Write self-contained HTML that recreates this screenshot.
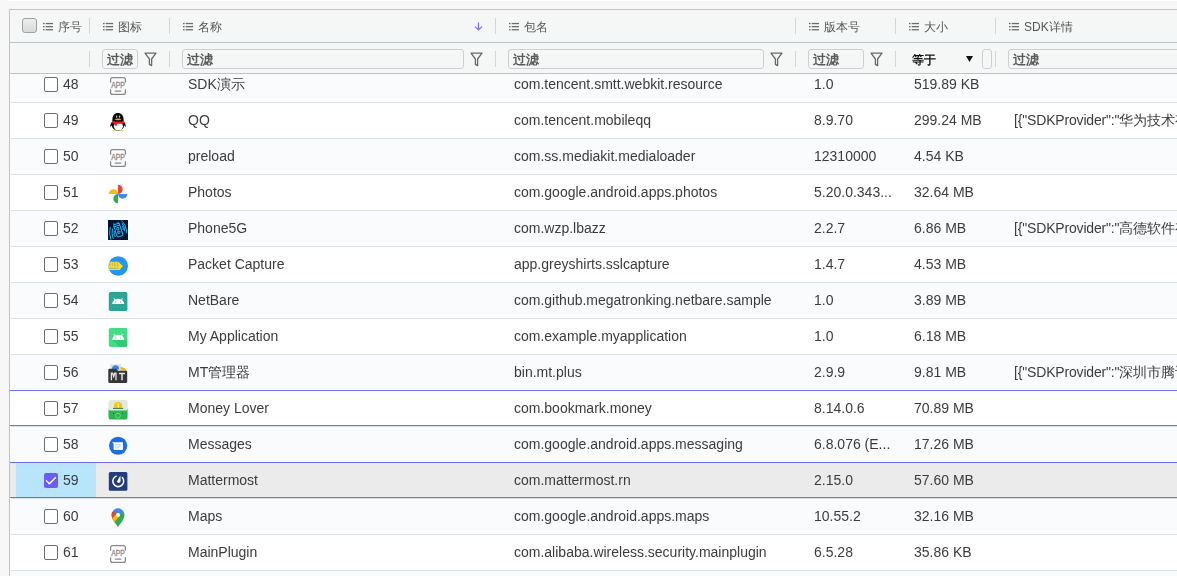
<!DOCTYPE html><html><head><meta charset="utf-8"><style>
*{box-sizing:border-box;margin:0;padding:0}
html,body{width:1177px;height:576px;overflow:hidden;background:#f7f7f7;font-family:"Liberation Sans", sans-serif}
.a{position:absolute}
.t,.ht,.inp{will-change:transform}
.mi,.ic{position:absolute;display:block}
.ht{position:absolute;font-size:12px;color:#555;line-height:14px;white-space:nowrap}
.sep{position:absolute;width:1px;background:#d3d7d9}
.inp{position:absolute;height:20px;top:49px;border:1px solid #cdd0d1;border-radius:3px;font-size:13px;color:#5a5a5a;line-height:19px;padding-left:4px;white-space:nowrap;overflow:hidden;font-weight:bold}
.row{position:absolute;left:11px;width:1166px;height:36px;border-bottom:1px solid #dde0e3}
.row.o{background:#fafbfd}
.row.e{background:#fff}
.cb{position:absolute;left:44px;width:14px;height:15px;border:1.6px solid #6e6e6e;border-radius:2px;background:#fff}
.t{position:absolute;font-size:14px;color:#3c3c3c;line-height:16px;white-space:nowrap}
</style></head><body>
<div class="a" style="left:9px;top:0;width:1168px;height:1px;background:#fff"></div>
<div class="a" id="grid" style="left:9px;top:9px;width:1168px;height:567px;border-left:1px solid #bcc4ca;border-top:1px solid #bcc4ca;background:#fff;overflow:hidden"></div>

<div class="row o" style="top:67px"></div>
<div class="row e" style="top:103px"></div>
<div class="row o" style="top:139px"></div>
<div class="row e" style="top:175px"></div>
<div class="row o" style="top:211px"></div>
<div class="row e" style="top:247px"></div>
<div class="row o" style="top:283px"></div>
<div class="row e" style="top:319px"></div>
<div class="row o" style="top:355px"></div>
<div class="row e" style="top:391px"></div>
<div class="row o" style="top:427px"></div>
<div class="row e" style="top:463px"></div>
<div class="row o" style="top:499px"></div>
<div class="row e" style="top:535px"></div>
<div class="row o" style="top:571px"></div>
<div class="a" style="left:10px;top:390px;width:1167px;height:1px;background:#6f6ff4"></div>
<div class="a" style="left:10px;top:425px;width:1167px;height:1px;background:#6f6ff4"></div>
<div class="a" style="left:10px;top:463px;width:1167px;height:34px;background:#ebebeb"></div>
<div class="a" style="left:16px;top:463px;width:80px;height:34px;background:#b8e4fc"></div>
<div class="a" style="left:10px;top:462px;width:1167px;height:1px;background:#6f6ff4"></div>
<div class="a" style="left:10px;top:497px;width:1167px;height:1px;background:#6f6ff4"></div>
<div class="cb" style="top:77px"></div>
<div class="t" style="left:63px;top:76px">48</div>
<svg class="ic" style="left:108px;top:76px" width="20" height="20" viewBox="0 0 20 20"><g fill="none" stroke="#8a8a8a" stroke-width="1.25" stroke-linecap="round"><path d="M2.6 6.2 V3.6 Q2.6 1.6 4.6 1.6 H15.4 Q17.4 1.6 17.4 3.6 V6.2"/><path d="M2.6 13.6 V16.4 Q2.6 18.4 4.6 18.4 H15.4 Q17.4 18.4 17.4 16.4 V13.6"/><path d="M7.2 15.1 H12.8"/></g><text x="10" y="12.3" text-anchor="middle" font-family="Liberation Sans" font-size="8.2" fill="#8a8a8a" stroke="#8a8a8a" stroke-width="0.3" textLength="13.6" lengthAdjust="spacingAndGlyphs">APP</text></svg>
<div class="t" style="left:188px;top:76px">SDK演示</div>
<div class="t" style="left:514px;top:76px">com.tencent.smtt.webkit.resource</div>
<div class="t" style="left:814px;top:76px">1.0</div>
<div class="t" style="left:914px;top:76px">519.89 KB</div>
<div class="cb" style="top:113px"></div>
<div class="t" style="left:63px;top:112px">49</div>
<svg class="ic" style="left:108px;top:112px" width="20" height="20" viewBox="0 0 20 20"><path d="M10 1 C13.3 1 15.5 3.4 15.6 7.2 L15.7 9.6 C16.8 11 17.9 12.6 17.8 14.6 C17.4 14.8 16.7 14.2 16.2 13.6 C15.9 16.5 13.8 18.6 10 18.7 C6.2 18.6 4.1 16.5 3.8 13.6 C3.3 14.2 2.6 14.8 2.2 14.6 C2.1 12.6 3.2 11 4.3 9.6 L4.4 7.2 C4.5 3.4 6.7 1 10 1 Z" fill="#0b0b0b"/><ellipse cx="10.4" cy="14.3" rx="4.6" ry="4" fill="#fff"/><path d="M4.2 8.7 Q10 10.6 16.2 8.7 L16.6 10.9 Q10 12.6 4 10.9 Z" fill="#ef1c23"/><path d="M6.8 10.6 H9.1 V13.6 H6.8 Z" fill="#ef1c23"/><ellipse cx="10.1" cy="7.3" rx="3.1" ry="0.85" fill="#f5a400"/><ellipse cx="8.6" cy="4.6" rx="0.6" ry="1.2" fill="#d8d8d8"/><ellipse cx="11.5" cy="4.6" rx="0.6" ry="1.2" fill="#d8d8d8"/><path d="M3.8 18.8 Q6 17.2 8.6 18.6 Z M11.6 18.6 Q14 17.2 16.2 18.8 Z" fill="#f6a800"/></svg>
<div class="t" style="left:188px;top:112px">QQ</div>
<div class="t" style="left:514px;top:112px">com.tencent.mobileqq</div>
<div class="t" style="left:814px;top:112px">8.9.70</div>
<div class="t" style="left:914px;top:112px">299.24 MB</div>
<div class="t" style="left:1014px;top:112px;letter-spacing:-0.17px">[{"SDKProvider":"华为技术有限公司"</div>
<div class="cb" style="top:149px"></div>
<div class="t" style="left:63px;top:148px">50</div>
<svg class="ic" style="left:108px;top:148px" width="20" height="20" viewBox="0 0 20 20"><g fill="none" stroke="#8a8a8a" stroke-width="1.25" stroke-linecap="round"><path d="M2.6 6.2 V3.6 Q2.6 1.6 4.6 1.6 H15.4 Q17.4 1.6 17.4 3.6 V6.2"/><path d="M2.6 13.6 V16.4 Q2.6 18.4 4.6 18.4 H15.4 Q17.4 18.4 17.4 16.4 V13.6"/><path d="M7.2 15.1 H12.8"/></g><text x="10" y="12.3" text-anchor="middle" font-family="Liberation Sans" font-size="8.2" fill="#8a8a8a" stroke="#8a8a8a" stroke-width="0.3" textLength="13.6" lengthAdjust="spacingAndGlyphs">APP</text></svg>
<div class="t" style="left:188px;top:148px">preload</div>
<div class="t" style="left:514px;top:148px">com.ss.mediakit.medialoader</div>
<div class="t" style="left:814px;top:148px">12310000</div>
<div class="t" style="left:914px;top:148px">4.54 KB</div>
<div class="cb" style="top:185px"></div>
<div class="t" style="left:63px;top:184px">51</div>
<svg class="ic" style="left:108px;top:184px" width="20" height="20" viewBox="0 0 20 20"><path d="M10 10 H0.7 A4.65 4.65 0 0 1 10 10 Z" fill="#fbbc04"/><path d="M10 10 V0.7 A4.65 4.65 0 0 1 10 10 Z" fill="#ea4335"/><path d="M10 10 H19.3 A4.65 4.65 0 0 1 10 10 Z" fill="#4285f4"/><path d="M10 10 V19.3 A4.65 4.65 0 0 1 10 10 Z" fill="#34a853"/></svg>
<div class="t" style="left:188px;top:184px">Photos</div>
<div class="t" style="left:514px;top:184px">com.google.android.apps.photos</div>
<div class="t" style="left:814px;top:184px">5.20.0.343...</div>
<div class="t" style="left:914px;top:184px">32.64 MB</div>
<div class="cb" style="top:221px"></div>
<div class="t" style="left:63px;top:220px">52</div>
<svg class="ic" style="left:108px;top:220px" width="20" height="20" viewBox="0 0 20 20"><rect x="0" y="0" width="20" height="20" fill="#061632"/><g fill="none" stroke="#29b6f2" stroke-width="1" stroke-linecap="round"><g transform="rotate(-18 10.5 10.5)"><rect x="7.4" y="3.6" width="6" height="13" rx="1.2"/><path d="M7.4 5.6 H13.4 M8.2 3.6 V2.6 M12.6 3.6 V2.6"/><circle cx="10.4" cy="8.6" r="1.2"/><circle cx="10.4" cy="12.2" r="1.2"/></g><path d="M2.2 7.4 Q0.6 13 2.8 19.4"/><path d="M4.4 9 Q3.2 13.6 5.2 18.6"/><path d="M6.2 11.4 Q5.8 14.4 7 16.6"/><path d="M13.6 0.8 Q18 4.2 18.8 13"/><path d="M14.2 3.4 Q16.6 6.4 16.8 11"/><path d="M14.6 6.2 Q15.4 8 15.2 9.6"/></g></svg>
<div class="t" style="left:188px;top:220px">Phone5G</div>
<div class="t" style="left:514px;top:220px">com.wzp.lbazz</div>
<div class="t" style="left:814px;top:220px">2.2.7</div>
<div class="t" style="left:914px;top:220px">6.86 MB</div>
<div class="t" style="left:1014px;top:220px;letter-spacing:-0.17px">[{"SDKProvider":"高德软件有限公司"</div>
<div class="cb" style="top:257px"></div>
<div class="t" style="left:63px;top:256px">53</div>
<svg class="ic" style="left:108px;top:256px" width="20" height="20" viewBox="0 0 20 20"><defs><clipPath id="pc"><circle cx="10.2" cy="10" r="9.8"/></clipPath></defs><circle cx="10.2" cy="10" r="9.8" fill="#2196f3"/><g clip-path="url(#pc)"><path d="M-1 5.7 H10.4 L14.9 10 L11.6 14 H-1 Z" fill="#fdd835"/><path d="M0 12.3 H10" stroke="#97b97a" stroke-width="1"/><path d="M2.2 6.6 Q1 8 2.2 9.8 M4.6 6.6 Q3.4 8 4.6 9.8 M6.6 6.4 V9.8 H8 M9.4 6.4 V9.8 H10.6" fill="none" stroke="#98b680" stroke-width="0.9"/></g></svg>
<div class="t" style="left:188px;top:256px">Packet Capture</div>
<div class="t" style="left:514px;top:256px">app.greyshirts.sslcapture</div>
<div class="t" style="left:814px;top:256px">1.4.7</div>
<div class="t" style="left:914px;top:256px">4.53 MB</div>
<div class="cb" style="top:293px"></div>
<div class="t" style="left:63px;top:292px">54</div>
<svg class="ic" style="left:108px;top:292px" width="20" height="20" viewBox="0 0 20 20"><rect x="0.8" y="0" width="18.6" height="19" rx="1.8" fill="#26a392"/><g stroke="#fff" stroke-opacity="0.12" stroke-width="0.5"><path d="M3.8 0 V19 M6.8 0 V19 M9.8 0 V19 M12.8 0 V19 M15.8 0 V19 M0.8 3 H19.4 M0.8 6 H19.4 M0.8 9 H19.4 M0.8 12 H19.4 M0.8 15 H19.4"/></g><path d="M4.2 12.1 A6 5.4 0 0 1 16.2 12.1 Z" fill="#fff"/><path d="M6 6.4 L7 7.8 M14.4 6.4 L13.4 7.8" stroke="#fff" stroke-width="0.9" stroke-linecap="round"/><circle cx="7.8" cy="10" r="0.6" fill="#26a392"/><circle cx="12.5" cy="10" r="0.6" fill="#26a392"/></svg>
<div class="t" style="left:188px;top:292px">NetBare</div>
<div class="t" style="left:514px;top:292px">com.github.megatronking.netbare.sample</div>
<div class="t" style="left:814px;top:292px">1.0</div>
<div class="t" style="left:914px;top:292px">3.89 MB</div>
<div class="cb" style="top:329px"></div>
<div class="t" style="left:63px;top:328px">55</div>
<svg class="ic" style="left:108px;top:328px" width="20" height="20" viewBox="0 0 20 20"><rect x="0.8" y="0" width="18.6" height="19" rx="1.8" fill="#3ddc84"/><g stroke="#fff" stroke-opacity="0.12" stroke-width="0.5"><path d="M3.8 0 V19 M6.8 0 V19 M9.8 0 V19 M12.8 0 V19 M15.8 0 V19 M0.8 3 H19.4 M0.8 6 H19.4 M0.8 9 H19.4 M0.8 12 H19.4 M0.8 15 H19.4"/></g><path d="M3.6 11.4 L11.4 19 H17.6 A1.6 1.6 0 0 0 19.2 17.4 V13 L16.6 11.4 Z" fill="#2cb96a" opacity="0.55"/><path d="M4.2 12.1 A6 5.4 0 0 1 16.2 12.1 Z" fill="#fff"/><path d="M6 6.4 L7 7.8 M14.4 6.4 L13.4 7.8" stroke="#fff" stroke-width="0.9" stroke-linecap="round"/><circle cx="7.8" cy="10" r="0.6" fill="#3ddc84"/><circle cx="12.5" cy="10" r="0.6" fill="#3ddc84"/></svg>
<div class="t" style="left:188px;top:328px">My Application</div>
<div class="t" style="left:514px;top:328px">com.example.myapplication</div>
<div class="t" style="left:814px;top:328px">1.0</div>
<div class="t" style="left:914px;top:328px">6.18 MB</div>
<div class="cb" style="top:365px"></div>
<div class="t" style="left:63px;top:364px">56</div>
<svg class="ic" style="left:108px;top:364px" width="20" height="20" viewBox="0 0 20 20"><rect x="2.2" y="0.2" width="10.8" height="5.6" fill="#e2e2e2"/><path d="M4 5.4 Q4 1.2 7.6 1.2 Q11.2 1.2 11.2 5.4 Z" fill="#3b82f0"/><path d="M12.6 2.8 Q17 3.4 19.2 6.4 H12.6 Z" fill="#f9b40f"/><path d="M0.3 6.2 Q0.3 4.8 1.6 4.8 H8.4 L10 6.8 H18 Q19.2 6.8 19.2 8 V17.8 Q19.2 19 18 19 H1.6 Q0.3 19 0.3 17.8 Z" fill="#373737"/><path d="M3.4 16.3 V9.2 H4.6 L5.7 12.4 L6.8 9.2 H8 V16.3" fill="none" stroke="#e6e6e6" stroke-width="1.3"/><path d="M11 9.6 H17 M14 9.6 V16.3" fill="none" stroke="#e6e6e6" stroke-width="1.5"/></svg>
<div class="t" style="left:188px;top:364px">MT管理器</div>
<div class="t" style="left:514px;top:364px">bin.mt.plus</div>
<div class="t" style="left:814px;top:364px">2.9.9</div>
<div class="t" style="left:914px;top:364px">9.81 MB</div>
<div class="t" style="left:1014px;top:364px;letter-spacing:-0.17px">[{"SDKProvider":"深圳市腾讯计算机"</div>
<div class="cb" style="top:401px"></div>
<div class="t" style="left:63px;top:400px">57</div>
<svg class="ic" style="left:108px;top:400px" width="20" height="20" viewBox="0 0 20 20"><path d="M0.5 8.6 H19.6 V16.9 A2.6 2.6 0 0 1 17 19.5 H3.1 A2.6 2.6 0 0 1 0.5 16.9 Z" fill="#2db54e"/><path d="M0.5 2.6 A2.6 2.6 0 0 1 3.1 0 H17 A2.6 2.6 0 0 1 19.6 2.6 V9 Q19.6 10.4 18 10.4 H2.1 Q0.5 10.4 0.5 9 Z" fill="#e0e8e2"/><path d="M7.15 8.6 A4 4 0 1 1 13.05 8.6 Z" fill="#f7c600"/><path d="M9.7 3.6 L10.7 3.2 V8.2 H9.8 Z" fill="#fff"/><path d="M5.4 8.4 H14.8" stroke="#2d6b3a" stroke-width="0.9" stroke-linecap="round"/><circle cx="5.5" cy="13.5" r="0.6" fill="#16542a"/><circle cx="14.8" cy="13.5" r="0.6" fill="#16542a"/><circle cx="10" cy="15.6" r="2.4" fill="none" stroke="#7cd494" stroke-width="0.9"/></svg>
<div class="t" style="left:188px;top:400px">Money Lover</div>
<div class="t" style="left:514px;top:400px">com.bookmark.money</div>
<div class="t" style="left:814px;top:400px">8.14.0.6</div>
<div class="t" style="left:914px;top:400px">70.89 MB</div>
<div class="cb" style="top:437px"></div>
<div class="t" style="left:63px;top:436px">58</div>
<svg class="ic" style="left:108px;top:436px" width="20" height="20" viewBox="0 0 20 20"><circle cx="10.1" cy="9.75" r="9.1" fill="#1b6fe6"/><path d="M4.2 6.2 H14.9 V13.2 Q14.9 14 14.1 14 H6.4 Q5.6 14 5.6 13.2 V8 Z" fill="#fff"/><path d="M7.2 8.6 H13 M7.2 10.2 H13 M7.2 11.8 H11" stroke="#b9d2f8" stroke-width="0.9"/></svg>
<div class="t" style="left:188px;top:436px">Messages</div>
<div class="t" style="left:514px;top:436px">com.google.android.apps.messaging</div>
<div class="t" style="left:814px;top:436px">6.8.076 (E...</div>
<div class="t" style="left:914px;top:436px">17.26 MB</div>
<div class="a" style="left:44px;top:473px;width:14px;height:15px;background:#6b5cf5;border-radius:2px"></div><svg class="ic" style="left:44px;top:473px" width="14" height="15" viewBox="0 0 14 15"><path d="M2.2 7.6 L5.4 10.8 L11.8 4.2" fill="none" stroke="#fff" stroke-width="1.4"/></svg>
<div class="t" style="left:63px;top:472px">59</div>
<svg class="ic" style="left:108px;top:472px" width="20" height="20" viewBox="0 0 20 20"><rect x="0.8" y="0" width="18.6" height="18.8" rx="1.5" fill="#213d7c"/><path d="M8.8 3.2 A6.2 6.2 0 1 0 14.6 4.8 L13.4 5.6 A4.7 4.7 0 1 1 9 4.6 Z" fill="#fff"/><path d="M12.4 3.6 L12.6 9 A1.9 1.9 0 0 1 8.9 9.6 Z" fill="#fff"/></svg>
<div class="t" style="left:188px;top:472px">Mattermost</div>
<div class="t" style="left:514px;top:472px">com.mattermost.rn</div>
<div class="t" style="left:814px;top:472px">2.15.0</div>
<div class="t" style="left:914px;top:472px">57.60 MB</div>
<div class="cb" style="top:509px"></div>
<div class="t" style="left:63px;top:508px">60</div>
<svg class="ic" style="left:108px;top:508px" width="20" height="20" viewBox="0 0 20 20"><defs><clipPath id="mp"><path d="M10 19.2 C9.2 16.6 3.6 13 3.6 7 A6.4 6.4 0 0 1 16.4 7 C16.4 13 10.8 16.6 10 19.2 Z"/></clipPath></defs><g clip-path="url(#mp)"><rect x="0" y="0" width="20" height="20" fill="#34a853"/><path d="M4.6 2.6 L10 7 L16.6 3.4 V-1 H4.6 Z" fill="#4285f4"/><path d="M3 2 L4.8 2.6 L8.4 6 L4.8 10.6 L2.6 10 Z" fill="#ea4335"/><path d="M8.4 6 L11.2 8.6 L6.2 14.2 L3.4 11.2 Z" fill="#fbbc04"/></g><circle cx="10" cy="7" r="2.1" fill="#fff"/></svg>
<div class="t" style="left:188px;top:508px">Maps</div>
<div class="t" style="left:514px;top:508px">com.google.android.apps.maps</div>
<div class="t" style="left:814px;top:508px">10.55.2</div>
<div class="t" style="left:914px;top:508px">32.16 MB</div>
<div class="cb" style="top:545px"></div>
<div class="t" style="left:63px;top:544px">61</div>
<svg class="ic" style="left:108px;top:544px" width="20" height="20" viewBox="0 0 20 20"><g fill="none" stroke="#8a8a8a" stroke-width="1.25" stroke-linecap="round"><path d="M2.6 6.2 V3.6 Q2.6 1.6 4.6 1.6 H15.4 Q17.4 1.6 17.4 3.6 V6.2"/><path d="M2.6 13.6 V16.4 Q2.6 18.4 4.6 18.4 H15.4 Q17.4 18.4 17.4 16.4 V13.6"/><path d="M7.2 15.1 H12.8"/></g><text x="10" y="12.3" text-anchor="middle" font-family="Liberation Sans" font-size="8.2" fill="#8a8a8a" stroke="#8a8a8a" stroke-width="0.3" textLength="13.6" lengthAdjust="spacingAndGlyphs">APP</text></svg>
<div class="t" style="left:188px;top:544px">MainPlugin</div>
<div class="t" style="left:514px;top:544px">com.alibaba.wireless.security.mainplugin</div>
<div class="t" style="left:814px;top:544px">6.5.28</div>
<div class="t" style="left:914px;top:544px">35.86 KB</div>
<div class="a" style="left:10px;top:10px;width:1167px;height:64px;background:#f5f7f7;border-bottom:1px solid #bcc4ca"></div>
<div class="a" style="left:10px;top:42px;width:1167px;height:1px;background:#bcc4ca"></div>
<div class="a" style="left:22px;top:18px;width:15px;height:15px;border:1px solid #a0a0a0;border-radius:3px;background:linear-gradient(#eee,#d8d8d8)"></div>
<svg class="mi" style="left:43px;top:22px" width="11" height="9" viewBox="0 0 11 9"><g fill="#6b6b6b"><rect x="0" y="0.9" width="1.6" height="1.3"/><rect x="2.7" y="0.9" width="7.3" height="1.3"/><rect x="0" y="4.0" width="1.6" height="1.3"/><rect x="2.7" y="4.0" width="7.3" height="1.3"/><rect x="0" y="7.1" width="1.6" height="1.3"/><rect x="2.7" y="7.1" width="7.3" height="1.3"/></g></svg>
<div class="ht" style="left:58px;top:19.5px">序号</div>
<div class="sep" style="left:89px;top:18px;height:16px"></div>
<div class="sep" style="left:89px;top:51px;height:16px"></div>
<svg class="mi" style="left:103px;top:22px" width="11" height="9" viewBox="0 0 11 9"><g fill="#6b6b6b"><rect x="0" y="0.9" width="1.6" height="1.3"/><rect x="2.7" y="0.9" width="7.3" height="1.3"/><rect x="0" y="4.0" width="1.6" height="1.3"/><rect x="2.7" y="4.0" width="7.3" height="1.3"/><rect x="0" y="7.1" width="1.6" height="1.3"/><rect x="2.7" y="7.1" width="7.3" height="1.3"/></g></svg>
<div class="ht" style="left:118px;top:19.5px">图标</div>
<div class="sep" style="left:169px;top:18px;height:16px"></div>
<div class="sep" style="left:169px;top:51px;height:16px"></div>
<svg class="mi" style="left:183px;top:22px" width="11" height="9" viewBox="0 0 11 9"><g fill="#6b6b6b"><rect x="0" y="0.9" width="1.6" height="1.3"/><rect x="2.7" y="0.9" width="7.3" height="1.3"/><rect x="0" y="4.0" width="1.6" height="1.3"/><rect x="2.7" y="4.0" width="7.3" height="1.3"/><rect x="0" y="7.1" width="1.6" height="1.3"/><rect x="2.7" y="7.1" width="7.3" height="1.3"/></g></svg>
<div class="ht" style="left:198px;top:19.5px">名称</div>
<div class="sep" style="left:495px;top:18px;height:16px"></div>
<div class="sep" style="left:495px;top:51px;height:16px"></div>
<svg class="mi" style="left:509px;top:22px" width="11" height="9" viewBox="0 0 11 9"><g fill="#6b6b6b"><rect x="0" y="0.9" width="1.6" height="1.3"/><rect x="2.7" y="0.9" width="7.3" height="1.3"/><rect x="0" y="4.0" width="1.6" height="1.3"/><rect x="2.7" y="4.0" width="7.3" height="1.3"/><rect x="0" y="7.1" width="1.6" height="1.3"/><rect x="2.7" y="7.1" width="7.3" height="1.3"/></g></svg>
<div class="ht" style="left:524px;top:19.5px">包名</div>
<div class="sep" style="left:795px;top:18px;height:16px"></div>
<div class="sep" style="left:795px;top:51px;height:16px"></div>
<svg class="mi" style="left:809px;top:22px" width="11" height="9" viewBox="0 0 11 9"><g fill="#6b6b6b"><rect x="0" y="0.9" width="1.6" height="1.3"/><rect x="2.7" y="0.9" width="7.3" height="1.3"/><rect x="0" y="4.0" width="1.6" height="1.3"/><rect x="2.7" y="4.0" width="7.3" height="1.3"/><rect x="0" y="7.1" width="1.6" height="1.3"/><rect x="2.7" y="7.1" width="7.3" height="1.3"/></g></svg>
<div class="ht" style="left:824px;top:19.5px">版本号</div>
<div class="sep" style="left:895px;top:18px;height:16px"></div>
<div class="sep" style="left:895px;top:51px;height:16px"></div>
<svg class="mi" style="left:909px;top:22px" width="11" height="9" viewBox="0 0 11 9"><g fill="#6b6b6b"><rect x="0" y="0.9" width="1.6" height="1.3"/><rect x="2.7" y="0.9" width="7.3" height="1.3"/><rect x="0" y="4.0" width="1.6" height="1.3"/><rect x="2.7" y="4.0" width="7.3" height="1.3"/><rect x="0" y="7.1" width="1.6" height="1.3"/><rect x="2.7" y="7.1" width="7.3" height="1.3"/></g></svg>
<div class="ht" style="left:924px;top:19.5px">大小</div>
<div class="sep" style="left:995px;top:18px;height:16px"></div>
<div class="sep" style="left:995px;top:51px;height:16px"></div>
<svg class="mi" style="left:1009px;top:22px" width="11" height="9" viewBox="0 0 11 9"><g fill="#6b6b6b"><rect x="0" y="0.9" width="1.6" height="1.3"/><rect x="2.7" y="0.9" width="7.3" height="1.3"/><rect x="0" y="4.0" width="1.6" height="1.3"/><rect x="2.7" y="4.0" width="7.3" height="1.3"/><rect x="0" y="7.1" width="1.6" height="1.3"/><rect x="2.7" y="7.1" width="7.3" height="1.3"/></g></svg>
<div class="ht" style="left:1024px;top:19.5px">SDK详情</div>
<svg class="mi" style="left:474px;top:22px" width="9" height="9" viewBox="0 0 9 9"><path d="M4.5 0.5 V8 M1 4.6 L4.5 8 L8 4.6" fill="none" stroke="#7b6cf6" stroke-width="1.2"/></svg>
<div class="inp" style="left:102px;width:36px">过滤</div>
<svg class="mi" style="left:144px;top:52px" width="13" height="15" viewBox="0 0 13 15"><path d="M1 1.2 H12 L7.6 7 V13.6 L5.4 12.4 V7 Z" fill="none" stroke="#6a6a6a" stroke-width="1.3" stroke-linejoin="round"/></svg>
<div class="inp" style="left:182px;width:282px">过滤</div>
<svg class="mi" style="left:470px;top:52px" width="13" height="15" viewBox="0 0 13 15"><path d="M1 1.2 H12 L7.6 7 V13.6 L5.4 12.4 V7 Z" fill="none" stroke="#6a6a6a" stroke-width="1.3" stroke-linejoin="round"/></svg>
<div class="inp" style="left:508px;width:256px">过滤</div>
<svg class="mi" style="left:770px;top:52px" width="13" height="15" viewBox="0 0 13 15"><path d="M1 1.2 H12 L7.6 7 V13.6 L5.4 12.4 V7 Z" fill="none" stroke="#6a6a6a" stroke-width="1.3" stroke-linejoin="round"/></svg>
<div class="inp" style="left:808px;width:56px">过滤</div>
<svg class="mi" style="left:870px;top:52px" width="13" height="15" viewBox="0 0 13 15"><path d="M1 1.2 H12 L7.6 7 V13.6 L5.4 12.4 V7 Z" fill="none" stroke="#6a6a6a" stroke-width="1.3" stroke-linejoin="round"/></svg>
<div class="ht" style="left:912px;top:53px;font-weight:bold;color:#111">等于</div>
<svg class="mi" style="left:966px;top:56px" width="7" height="6" viewBox="0 0 7 6"><path d="M0 0 H7 L3.5 6 Z" fill="#111"/></svg>
<div class="inp" style="left:982px;width:10px"></div>
<div class="inp" style="left:1008px;width:200px">过滤</div>
</body></html>
